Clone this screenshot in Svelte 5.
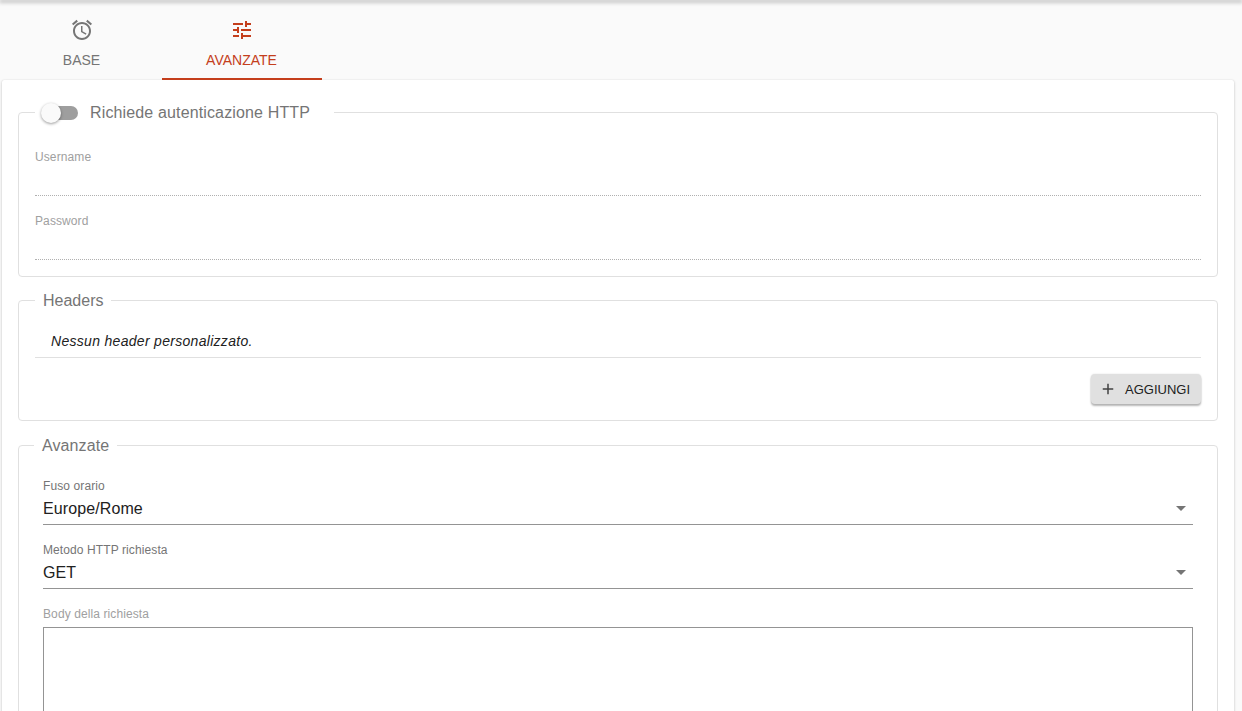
<script lang="ts">
  let activeTab = $state("advanced");
  let authEnabled = $state(false);
  let username = $state("");
  let password = $state("");
  let timezone = $state("Europe/Rome");
  let method = $state("GET");
  let body = $state("");

  const tabs = [
    {
      id: "base",
      label: "Base",
      icon: "M22 5.72l-4.6-3.86-1.29 1.53 4.6 3.86L22 5.72zM7.88 3.39L6.6 1.86 2 5.71l1.29 1.53 4.59-3.85zM12.5 8H11v6l4.75 2.85.75-1.23-4-2.37V8zM12 4c-4.97 0-9 4.03-9 9s4.02 9 9 9c4.97 0 9-4.03 9-9s-4.03-9-9-9zm0 16c-3.87 0-7-3.13-7-7s3.13-7 7-7 7 3.13 7 7-3.13 7-7 7z",
    },
    {
      id: "advanced",
      label: "Avanzate",
      icon: "M3 17v2h6v-2H3zM3 5v2h10V5H3zm10 16v-2h8v-2h-8v-2h-2v6h2zM7 9v2H3v2h4v2h2V9H7zm14 4v-2H11v2h10zm-6-4h2V7h4V5h-4V3h-2v6z",
    },
  ];
</script>

<div class="page">
  <div class="topbar"></div>
  <div class="content">
    <nav class="tabs">
      {#each tabs as tab (tab.id)}
        <button class="tab" class:active={activeTab === tab.id} onclick={() => (activeTab = tab.id)}>
          <svg viewBox="0 0 24 24" width="24" height="24"><path d={tab.icon} /></svg>
          <span>{tab.label}</span>
        </button>
      {/each}
    </nav>

    <main class="card">
      <fieldset class="auth">
        <legend>
          <label class="toggle">
            <input type="checkbox" bind:checked={authEnabled} />
            <span class="track"><span class="thumb"></span></span>
            <span class="toggle-text">Richiede autenticazione HTTP</span>
          </label>
        </legend>
        <label class="field">
          <span>Username</span>
          <input type="text" bind:value={username} disabled={!authEnabled} />
        </label>
        <label class="field">
          <span>Password</span>
          <input type="password" bind:value={password} disabled={!authEnabled} />
        </label>
      </fieldset>

      <fieldset class="headers">
        <legend>Headers</legend>
        <p class="empty">Nessun header personalizzato.</p>
        <div class="actions">
          <button class="add">
            <svg viewBox="0 0 24 24" width="18" height="18"><path d="M19 13h-6v6h-2v-6H5v-2h6V5h2v6h6v2z" /></svg>
            Aggiungi
          </button>
        </div>
      </fieldset>

      <fieldset class="advanced">
        <legend>Avanzate</legend>
        <label class="select">
          <span>Fuso orario</span>
          <select bind:value={timezone}>
            <option>Europe/Rome</option>
            <option>Europe/London</option>
            <option>UTC</option>
          </select>
        </label>
        <label class="select">
          <span>Metodo HTTP richiesta</span>
          <select bind:value={method}>
            <option>GET</option>
            <option>POST</option>
            <option>PUT</option>
          </select>
        </label>
        <label class="body-field">
          <span>Body della richiesta</span>
          <textarea bind:value={body}></textarea>
        </label>
      </fieldset>
    </main>
  </div>
</div>

<style>
  :global(body) {
    margin: 0;
    background: #fafafa;
    overflow: hidden;
    font-family: "Liberation Sans", Arial, sans-serif;
  }

  .page {
    height: 711px;
    overflow: hidden;
  }

  .topbar {
    height: 0;
    box-shadow: 0 1px 4px 1px rgba(0, 0, 0, 0.4);
  }

  .content {
    padding: 0 8px 0 2px;
  }

  .tabs {
    display: flex;
    height: 80px;
  }

  .tab {
    width: 160px;
    height: 80px;
    box-sizing: border-box;
    padding: 18px 0 0;
    border: 0;
    border-bottom: 2px solid transparent;
    background: none;
    color: #757575;
    font: 14px "Liberation Sans", Arial, sans-serif;
    text-transform: uppercase;
    display: flex;
    flex-direction: column;
    align-items: center;
    gap: 2px;
    cursor: pointer;
  }

  .tab svg {
    fill: currentColor;
  }

  .tab span {
    line-height: 32px;
    height: 32px;
    margin-left: -1px;
  }

  .tab.active {
    color: #c43e1c;
    border-bottom-color: #c43e1c;
  }

  .card {
    background: #fff;
    border-radius: 2px;
    padding: 20px 16px;
    height: 700px;
    box-sizing: border-box;
    box-shadow: 0 1px 3px rgba(0, 0, 0, 0.2), 0 0 1px rgba(0, 0, 0, 0.14);
  }

  fieldset {
    margin: 0 0 13px;
    padding: 12px 16px;
    border: 1px solid #e0e0e0;
    border-radius: 4px;
    min-width: 0;
  }

  legend {
    padding: 2px 8px 0;
    font-size: 16px;
    color: #757575;
  }

  .auth legend {
    padding: 0 24px 0 5px;
  }

  .toggle {
    display: flex;
    align-items: center;
    height: 24px;
    gap: 12px;
    cursor: pointer;
  }

  .toggle input {
    display: none;
  }

  .toggle-text {
    padding-top: 1px;
    letter-spacing: 0.14px;
  }

  .track {
    position: relative;
    display: block;
    width: 34px;
    height: 14px;
    margin: 2px 0 0 4px;
    border-radius: 7px;
    background: #9e9e9e;
  }

  .thumb {
    position: absolute;
    top: -3px;
    left: -3px;
    width: 20px;
    height: 20px;
    border-radius: 50%;
    background: #fafafa;
    box-shadow: 0 1px 3px rgba(0, 0, 0, 0.4);
  }

  .field {
    display: block;
    height: 60px;
    margin-bottom: 4px;
  }

  .field span {
    display: block;
    padding-top: 14px;
    font-size: 12px;
    line-height: 14px;
    letter-spacing: 0.1px;
    color: #a0a0a0;
  }

  .field input {
    display: block;
    width: 100%;
    height: 32px;
    box-sizing: border-box;
    border: 0;
    border-bottom: 1px dotted #b0b0b0;
    background: none;
    outline: none;
    font: 16px "Liberation Sans", Arial, sans-serif;
  }

  .headers {
    margin-bottom: 14px;
    padding: 0 16px 16px;
  }

  .empty {
    margin: 0;
    padding: 22px 16px 0;
    height: 25px;
    border-bottom: 1px solid #e0e0e0;
    font-size: 14px;
    font-style: italic;
    line-height: 18px;
    letter-spacing: 0.3px;
    color: #212121;
    box-sizing: content-box;
  }

  .actions {
    display: flex;
    justify-content: flex-end;
    padding-top: 16px;
  }

  .add {
    display: flex;
    align-items: center;
    gap: 8px;
    height: 30px;
    width: 110px;
    padding: 0 0 0 8px;
    border: 0;
    border-radius: 4px;
    background: #e0e0e0;
    color: #212121;
    font: 13px "Liberation Sans", Arial, sans-serif;
    text-transform: uppercase;
    box-shadow: 0 2px 2px rgba(0, 0, 0, 0.28), 0 0 2px rgba(0, 0, 0, 0.12);
    cursor: pointer;
  }

  .add svg {
    fill: #424242;
  }

  .advanced {
    padding: 10px 24px 0;
  }

  .advanced legend {
    margin-left: -9px;
    letter-spacing: 0.1px;
  }

  .select {
    display: block;
    height: 64px;
    position: relative;
  }

  .select span,
  .body-field span {
    display: block;
    padding-top: 14px;
    font-size: 12px;
    line-height: 14px;
    letter-spacing: 0.1px;
    color: #757575;
  }

  .body-field span {
    color: #a0a0a0;
  }

  .select select {
    display: block;
    width: 100%;
    height: 32px;
    padding: 0 0 1px;
    border: 0;
    border-bottom: 1px solid #949494;
    border-radius: 0;
    background: none;
    appearance: none;
    outline: none;
    color: #212121;
    font: 16px "Liberation Sans", Arial, sans-serif;
    letter-spacing: 0.1px;
  }

  .select::after {
    content: "";
    position: absolute;
    right: 7px;
    top: 41px;
    border-left: 5px solid transparent;
    border-right: 5px solid transparent;
    border-top: 5px solid #757575;
    pointer-events: none;
  }

  .body-field {
    display: block;
  }

  .body-field textarea {
    display: block;
    width: 100%;
    height: 160px;
    margin-top: 6px;
    box-sizing: border-box;
    border: 1px solid #949494;
    outline: none;
    resize: none;
  }
</style>
